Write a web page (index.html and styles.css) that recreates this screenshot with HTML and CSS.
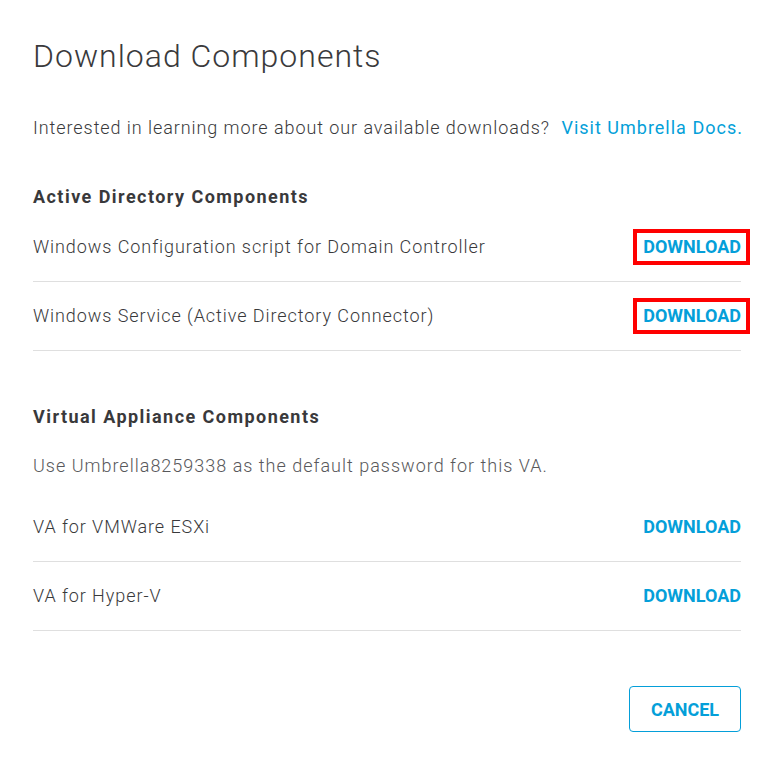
FILE: index.html
```html
<!DOCTYPE html>
<html lang="en">
<head>
<meta charset="utf-8">
<title>Download Components</title>
<link rel="stylesheet" href="styles.css">
</head>
<body>
<div class="modal">
  <h1 class="title">Download Components</h1>
  <p class="intro">Interested in learning more about our available downloads?&nbsp; <a class="link" href="#">Visit Umbrella Docs.</a></p>

  <h2 class="section-title">Active Directory Components</h2>
  <div class="rows rows-ad">
    <div class="row">
      <span class="row-label">Windows Configuration script for Domain Controller</span>
      <a class="dl highlight" href="#">DOWNLOAD</a>
    </div>
    <div class="row">
      <span class="row-label">Windows Service (Active Directory Connector)</span>
      <a class="dl highlight" href="#">DOWNLOAD</a>
    </div>
  </div>

  <h2 class="section-title section-va">Virtual Appliance Components</h2>
  <p class="note">Use Umbrella8259338 as the default password for this VA.</p>
  <div class="rows rows-va">
    <div class="row">
      <span class="row-label">VA for VMWare ESXi</span>
      <a class="dl" href="#">DOWNLOAD</a>
    </div>
    <div class="row">
      <span class="row-label">VA for Hyper-V</span>
      <a class="dl" href="#">DOWNLOAD</a>
    </div>
  </div>

  <div class="footer">
    <button class="btn-cancel" type="button">CANCEL</button>
  </div>
</div>
</body>
</html>
```

FILE: styles.css
```css
* { box-sizing: border-box; }
html, body {
  margin: 0;
  padding: 0;
  background: #ffffff;
}
body {
  font-family: Roboto, "Liberation Sans", sans-serif;
  color: #39393b;
}
.modal {
  width: 774px;
  padding: 36px 33px 0 33px;
}
.title {
  margin: 0;
  font-size: 32px;
  line-height: 40px;
  font-weight: 300;
  letter-spacing: 1px;
  color: #3a3a3c;
}
.intro {
  margin: 40px 0 0 0;
  font-size: 18px;
  line-height: 24px;
  font-weight: 300;
  letter-spacing: 0.93px;
  white-space: nowrap;
}
.link {
  margin-left: 1px;
  color: #049fd9;
  text-decoration: none;
  font-weight: 400;
  letter-spacing: 1px;
}
.section-title {
  margin: 45px 0 0 0;
  font-size: 18px;
  line-height: 24px;
  font-weight: 700;
  letter-spacing: 1.45px;
  color: #39393b;
}
.section-va {
  margin-top: 54px;
}
.rows-ad { margin-top: 4px; }
.note {
  margin: 25px 0 0 0;
  font-size: 18px;
  line-height: 24px;
  font-weight: 300;
  letter-spacing: 1px;
  color: #58585b;
}
.rows-va { margin-top: 15px; }
.row {
  display: flex;
  align-items: center;
  justify-content: space-between;
  height: 69px;
  border-bottom: 1px solid #dfdfdf;
}
.row-label {
  font-size: 18px;
  line-height: 24px;
  font-weight: 300;
  letter-spacing: 0.93px;
}
.dl {
  position: relative;
  color: #049fd9;
  text-decoration: none;
  font-size: 18px;
  font-weight: 700;
  line-height: 20px;
}
.highlight::after {
  content: "";
  position: absolute;
  left: -10px;
  right: -9px;
  top: -8px;
  bottom: -8px;
  border: 4px solid #ff0000;
}
.footer {
  display: flex;
  justify-content: flex-end;
  margin-top: 55px;
}
.btn-cancel {
  width: 112px;
  height: 46px;
  border: 1px solid #049fd9;
  border-radius: 4px;
  background: #fff;
  color: #049fd9;
  font-family: Roboto, "Liberation Sans", sans-serif;
  font-size: 18px;
  font-weight: 700;
  padding: 0;
  cursor: pointer;
}
```
